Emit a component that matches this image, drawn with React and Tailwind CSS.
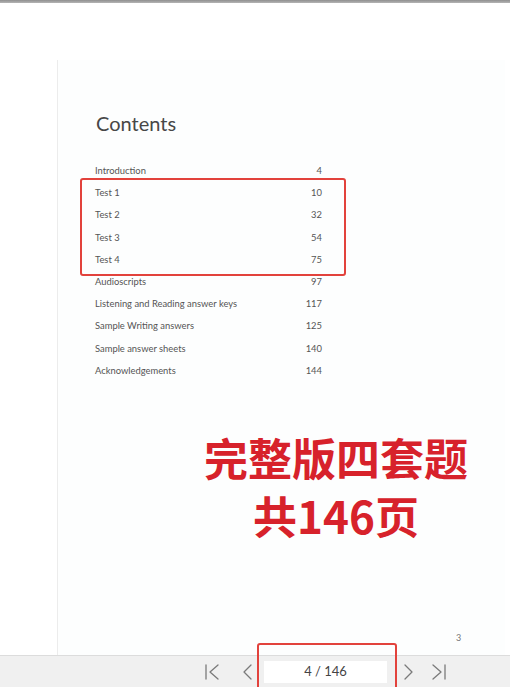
const entries = [
  { title: "Introduction", page: 4 },
  { title: "Test 1", page: 10, boxed: true },
  { title: "Test 2", page: 32, boxed: true },
  { title: "Test 3", page: 54, boxed: true },
  { title: "Test 4", page: 75, boxed: true },
  { title: "Audioscripts", page: 97 },
  { title: "Listening and Reading answer keys", page: 117 },
  { title: "Sample Writing answers", page: 125 },
  { title: "Sample answer sheets", page: 140 },
  { title: "Acknowledgements", page: 144 },
];

function Row({ title, page }) {
  return (
    <div className="flex justify-between leading-[22.2px] text-[9.4px] text-[#555]">
      <span>{title}</span>
      <span>{page}</span>
    </div>
  );
}

function NavIcon({ d }) {
  return (
    <svg width="18" height="18" viewBox="0 0 18 18" fill="none" stroke="#7a7a7a" strokeWidth="1.3" strokeLinecap="round" strokeLinejoin="round">
      <path d={d} />
    </svg>
  );
}

export default function App() {
  const before = entries.slice(0, 1);
  const boxed = entries.filter(e => e.boxed);
  const after = entries.slice(5);

  return (
    <div className="h-[687px] w-[510px] flex flex-col bg-white overflow-hidden" style={{ fontFamily: "Lato, 'Open Sans', sans-serif" }}>
      {/* top strip */}
      <div className="h-[3px] bg-gradient-to-b from-[#8f8f8f] to-[#b5b5b5]" />

      {/* document area */}
      <div className="flex-1 pt-[57px] pl-[57px] pr-[5px] flex">
        <div className="flex-1 border-l border-[#ececec] bg-[#fdfefe] flex flex-col">
          <h1 className="mt-[51px] ml-[38px] text-[20px] leading-[24px] text-[#474747]">Contents</h1>

          <div className="mt-[25px] ml-[37px] w-[227px]">
            {before.map(e => <Row key={e.title} {...e} />)}
            <div className="relative">
              {boxed.map(e => <Row key={e.title} {...e} />)}
              <div className="absolute left-[-15px] right-[-24px] top-[-4px] bottom-[-5px] border-2 border-[#e2423c] rounded-[3px]" />
            </div>
            {after.map(e => <Row key={e.title} {...e} />)}
          </div>

          <div
            className="mt-[46px] ml-[128px] w-[300px] text-center text-[44px] leading-[58px] font-semibold text-[#d7222b]"
            style={{ fontFamily: "'Noto Sans CJK SC', sans-serif" }}
          >
            <div>完整版四套题</div>
            <div>共146页</div>
          </div>

          <div className="mt-[88px] ml-[398px] text-[9px] leading-[12px] text-[#777]">3</div>
        </div>
      </div>

      {/* bottom toolbar */}
      <div className="h-[32px] bg-[#f0f0f0] border-t border-[#dcdcdc] flex items-center pl-[203px]">
        <NavIcon d="M3 2 V16 M15 2 L7 9 L15 16" />
        <div className="w-[18px]" />
        <NavIcon d="M12 2 L5 9 L12 16" />
        <div className="relative ml-[7px] mr-[13px]">
          <div className="w-[123px] h-[22px] bg-white flex items-center justify-center text-[13px] text-[#444]">4 / 146</div>
          <div className="absolute left-[-7px] right-[-10px] top-[-18px] bottom-[-8px] border-2 border-[#e2423c] rounded-[3px]" />
        </div>
        <NavIcon d="M5 2 L12 9 L5 16" />
        <div className="w-[12px]" />
        <NavIcon d="M3 2 L11 9 L3 16 M15 2 V16" />
      </div>
    </div>
  );
}
